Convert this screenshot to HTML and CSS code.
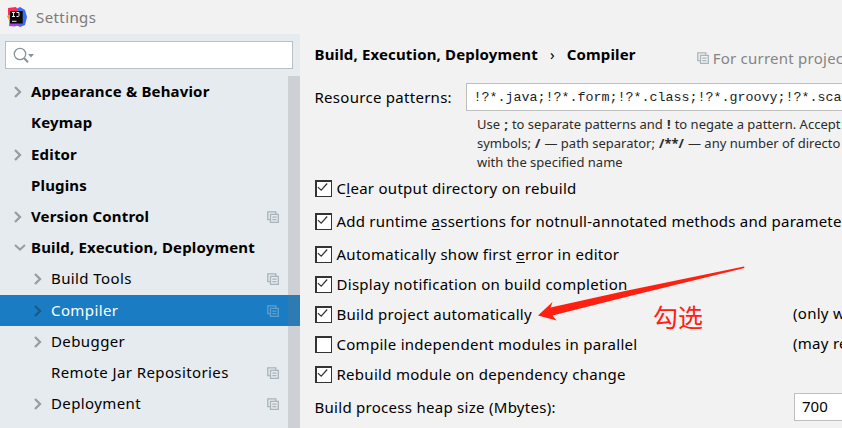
FILE: index.html
```html
<!DOCTYPE html>
<html lang="en">
<head>
<meta charset="utf-8">
<title>Settings</title>
<link rel="stylesheet" href="styles.css">
</head>
<body>
<svg class="defs" width="0" height="0">
  <defs>
    <symbol id="right" viewBox="0 0 8 12"><path d="M1 1l5 5-5 5" fill="none" stroke="currentColor" stroke-width="2.3"/></symbol>
    <symbol id="down" viewBox="0 0 12 8"><path d="M1 1l5 4.6L11 1" fill="none" stroke="currentColor" stroke-width="2"/></symbol>
    <symbol id="copy" viewBox="0 0 12 12"><path d="M2.8 8.7H.8V.8h8v2M3.5 3.4h7.8v7.9H3.5zM5.3 6.1h4.2M5.3 8.7h4.2" fill="none" stroke="currentColor" stroke-width="1.3"/></symbol>
    <symbol id="tick" viewBox="0 0 17 17"><path d="M3.500 8.600l4 3.700 7.300-8" fill="none" stroke="#333" stroke-width="1.5"/></symbol>
  </defs>
</svg>
<div class="window">
  <header class="titlebar">
    <svg class="logo" viewBox="0 0 20 20">
      <path d="M9 2l4-2 5 3 2 7-2 8-5 2-6-3z" fill="#3d6cec"/>
      <path d="M1 1l8-1 3 5-5 7-6-4z" fill="#fb2a5c"/>
      <path d="M0 9l4-2 2 7-3 1z" fill="#fb8a2a"/>
      <path d="M2.500 13l9 3 2 2-6 1.500-5.500-.5z" fill="#a445e0"/>
      <path d="M3 4h12.700v12.500H3z" fill="#0b0709"/>
      <path d="M5 5.500h3M6.500 5.500v4M5 9.500h3M9.500 5.500H12v3.200q0 .8-.8.8H9.500M5 14.300h4.500" fill="none" stroke="#eee" stroke-width="1"/>
    </svg>
    <span class="title">Settings</span>
  </header>
  <div class="columns">
    <aside class="sidebar">
      <div class="search">
        <svg viewBox="0 0 22 18"><circle cx="7" cy="7" r="5.700" fill="none" stroke="#87939a" stroke-width="1.300"/><path d="M11 11l4 4.300" stroke="#87939a" stroke-width="2"/><path d="M15 7h6l-3 3.500z" fill="#87939a"/></svg>
      </div>
      <nav class="tree">
        <div class="item top"><i><svg class="right"><use href="#right"/></svg></i><span>Appearance &amp; Behavior</span></div>
        <div class="item top"><i></i><span>Keymap</span></div>
        <div class="item top"><i><svg class="right"><use href="#right"/></svg></i><span>Editor</span></div>
        <div class="item top"><i></i><span>Plugins</span></div>
        <div class="item top"><i><svg class="right"><use href="#right"/></svg></i><span>Version Control</span><svg class="copy"><use href="#copy"/></svg></div>
        <div class="item top"><i><svg class="down"><use href="#down"/></svg></i><span>Build, Execution, Deployment</span></div>
        <div class="item sub"><i><svg class="right"><use href="#right"/></svg></i><span>Build Tools</span><svg class="copy"><use href="#copy"/></svg></div>
        <div class="item sub selected"><i><svg class="right"><use href="#right"/></svg></i><span>Compiler</span><svg class="copy"><use href="#copy"/></svg></div>
        <div class="item sub"><i><svg class="right"><use href="#right"/></svg></i><span>Debugger</span></div>
        <div class="item sub"><i></i><span>Remote Jar Repositories</span><svg class="copy"><use href="#copy"/></svg></div>
        <div class="item sub"><i><svg class="right"><use href="#right"/></svg></i><span>Deployment</span><svg class="copy"><use href="#copy"/></svg></div>
        <div class="scrollbar"></div>
      </nav>
    </aside>
    <main class="panel">
      <div class="crumbs">
        <b>Build, Execution, Deployment</b><span class="sep">›</span><b>Compiler</b>
        <span class="scope"><svg class="copy"><use href="#copy"/></svg>For current projec</span>
      </div>
      <div class="patterns"><label>Resource patterns:</label><div class="field mono">!?*.java;!?*.form;!?*.class;!?*.groovy;!?*.sca</div></div>
      <div class="hint">Use <b>;</b> to separate patterns and <b>!</b> to negate a pattern. Accept<br>symbols; <b>/</b> — path separator; <b>/**/</b> — any number of directo<br>with the specified name</div>
      <div class="options">
        <div class="option tall"><svg class="box"><use href="#tick"/></svg><span>C<u>l</u>ear output directory on rebuild</span></div>
        <div class="option tall"><svg class="box"><use href="#tick"/></svg><span class="long">Add runtime <u>a</u>ssertions for notnull-annotated methods and paramete</span></div>
        <div class="option"><svg class="box"><use href="#tick"/></svg><span>Automatically show first <u>e</u>rror in editor</span></div>
        <div class="option"><svg class="box"><use href="#tick"/></svg><span>Display notification on build completion</span></div>
        <div class="option"><svg class="box"><use href="#tick"/></svg><span>Build project automatically</span><em>(only w</em></div>
        <div class="option"><svg class="box"></svg><span>Compile independent modules in parallel</span><em>(may re</em></div>
        <div class="option"><svg class="box"><use href="#tick"/></svg><span>Rebuild module on dependency change</span></div>
      </div>
      <div class="heap"><label>Build process heap size (Mbytes):</label><div class="field">700</div></div>
    </main>
  </div>
  <svg class="arrow" viewBox="0 0 210 60"><path d="M206 .5L206.500 2 90 30.500 14.500 49.500l4 5L0 49.500 14.500 36 12.500 41.500 87 25z" fill="#ff2012"/></svg>
  <div class="note">勾选</div>
</div>
</body>
</html>
```

FILE: styles.css
```css
* { box-sizing: border-box; }
body {
  margin: 0;
  font: 15px/20px "Noto Sans", "Open Sans", sans-serif;
  letter-spacing: .28px;
  color: #000;
  background: #f2f2f2;
}
.defs { display: none; }
.window { position: relative; width: 842px; height: 428px; overflow: hidden; white-space: nowrap; }
.titlebar { display: flex; align-items: center; height: 34px; padding-left: 7px; color: #7b7b7b; }
.logo { width: 20px; height: 20px; margin-right: 9px; }
.title { letter-spacing: .4px; }
.columns { display: flex; height: 394px; }
.sidebar { width: 300px; flex: none; background: #e6ebef; padding-top: 7px; }
.search { width: 288px; height: 28px; margin: 0 0 7px 5px; background: #fff; border: 1px solid #bcbfc1; padding: 5px 0 0 7px; }
.search svg { display: block; width: 22px; height: 18px; }
.tree { position: relative; height: 352px; padding-top: .6px; }
.item { display: flex; align-items: center; height: 31.2px; padding: 0 21px 0 14px; }
.item.sub { padding-left: 34px; letter-spacing: .4px; }
.item i { display: flex; width: 17px; flex: none; }
.item svg { flex: none; }
.item span { padding-bottom: 2px; }
.top { font-weight: 700; letter-spacing: .17px; }
.right { width: 8px; height: 12px; color: #979da1; }
.down { width: 12px; height: 8px; color: #979da1; }
.copy { width: 12px; height: 12px; margin-left: auto; color: #a9b3ba; }
.selected { background: #1a7dc4; color: #fff; }
.selected .right { color: #175a8b; }
.selected .copy { color: #5fa0d0; }
.scrollbar { position: absolute; top: 0; right: 0; width: 12px; height: 352px; background: rgba(120, 115, 120, .22); }
.panel { flex: 1; min-width: 0; overflow: hidden; padding-left: 14.500px; }
.crumbs { display: flex; align-items: center; height: 41px; padding-bottom: 2px; letter-spacing: .15px; }
.sep { margin: 0 12px; }
.scope { display: flex; align-items: center; gap: 4px; margin-left: 61px; padding-top: 8px; color: #858585; letter-spacing: .24px; }
.patterns { display: flex; align-items: center; height: 44px; }
.patterns label { width: 151px; flex: none; }
.field { flex: 1; height: 28px; background: #fff; border: 1px solid #bfbfbf; border-width: 1.500px; border-right: 0; padding: 2px 7px; letter-spacing: 0; }
.mono { font-family: "Liberation Mono", monospace; font-size: 13.330px; padding: 4px 0 0 7px; color: #1c1c1c; }
.hint { margin-left: 162.500px; margin-top: -4px; font-size: 13px; line-height: 19px; color: #2c2c2c; letter-spacing: 0; }
.hint b { padding: 0 .7px; }
.options { padding-top: 1px; }
.option { display: flex; align-items: center; height: 30px; position: relative; }
.option.tall { margin-bottom: 3px; }
.option span { margin-left: 5px; padding-bottom: 1px; }
.option .long { letter-spacing: .23px; }
.option em { position: absolute; left: 478.500px; top: 4px; font-style: normal; }
.option u { text-underline-offset: 2px; text-decoration-skip-ink: none; }
.box { width: 17px; height: 17px; background: #fff; border: 1px solid #333; border-width: 2px 1px 1px 2px; overflow: visible; flex: none; }
.box use { width: 17px; height: 17px; transform: translate(-2px, -2px); }
.heap { display: flex; align-items: center; height: 36px; }
.heap label { width: 479.500px; flex: none; }
.arrow { position: absolute; left: 538px; top: 266px; width: 210px; height: 60px; }
.note { position: absolute; left: 653px; top: 300px; font: 25px/32px "Noto Sans CJK SC", sans-serif; letter-spacing: 0; color: #ff2012; }
```
